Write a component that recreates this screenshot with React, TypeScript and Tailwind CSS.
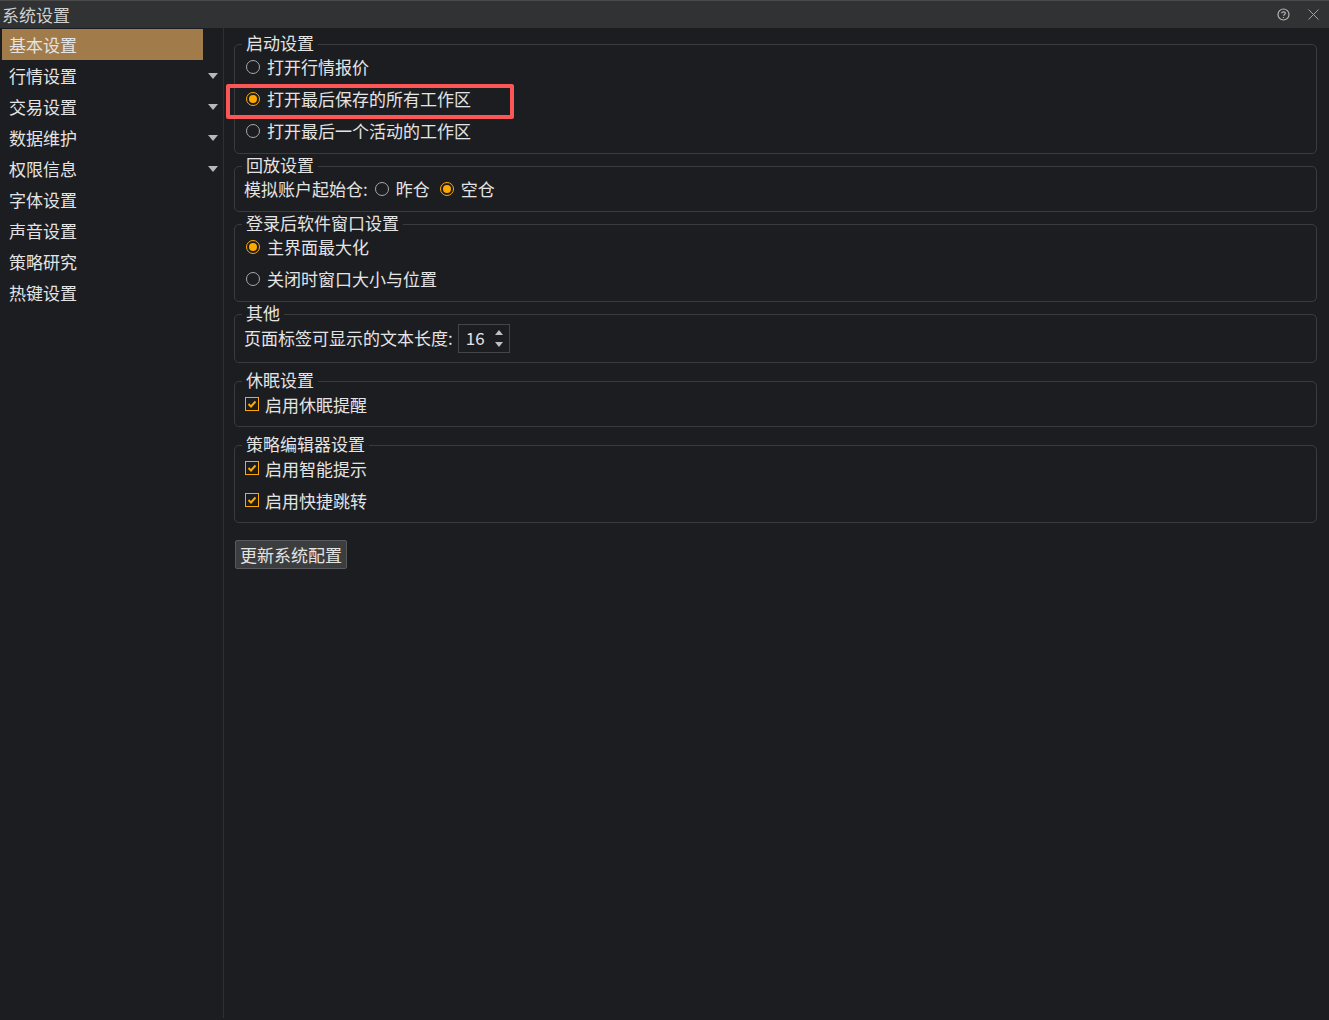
const font = { fontFamily: '"Noto Sans CJK SC", "Noto Sans", sans-serif' };

const menu = [
  { label: "基本设置", active: true },
  { label: "行情设置", arrow: true },
  { label: "交易设置", arrow: true },
  { label: "数据维护", arrow: true },
  { label: "权限信息", arrow: true },
  { label: "字体设置" },
  { label: "声音设置" },
  { label: "策略研究" },
  { label: "热键设置" },
];

function Radio({ checked }: { checked?: boolean }) {
  return (
    <span
      className={`flex h-[14px] w-[14px] shrink-0 items-center justify-center rounded-full border ${
        checked ? "border-[#ffa800]" : "border-[#a8a8a8]"
      }`}
    >
      {checked && <span className="h-[8px] w-[8px] rounded-full bg-[#ffa800]" />}
    </span>
  );
}

function RadioRow({ label, checked, h }: { label: string; checked?: boolean; h: string }) {
  return (
    <div className={`flex items-center gap-[7px] pl-[11px] ${h}`}>
      <Radio checked={checked} />
      <span>{label}</span>
    </div>
  );
}

function Check({ label, h }: { label: string; h: string }) {
  return (
    <div className={`flex items-center gap-[6px] pl-[10px] ${h}`}>
      <span className="flex h-[14px] w-[14px] shrink-0 items-center justify-center border border-[#ffa800]">
        <svg width="10" height="10" viewBox="0 0 10 10" fill="none">
          <path d="M1.5 5 L4 7.5 L8.5 2.5" stroke="#ffa800" strokeWidth="2" />
        </svg>
      </span>
      <span className="translate-y-px">{label}</span>
    </div>
  );
}

function Group({ title, className, children }: { title: string; className: string; children: React.ReactNode }) {
  return (
    <fieldset className={`rounded-[5px] border border-[#3a3b3e] ${className}`}>
      <legend className="ml-[7px] px-[4px] text-[17px] leading-[20px]">
        <span className="block -translate-y-px">{title}</span>
      </legend>
      {children}
    </fieldset>
  );
}

export default function App() {
  return (
    <div className="flex h-[1020px] w-[1329px] flex-col overflow-hidden bg-[#1c1d21] text-[17px] leading-[24px] text-[#e4e4e4]" style={font}>
      {/* Title bar */}
      <div className="flex h-[28px] shrink-0 items-center justify-between border-t border-[#4a4a4a] bg-[#313233] pl-[2px] pr-[10px]">
        <span className="text-[#d0d0d0]">系统设置</span>
        <div className="flex items-center gap-[18px]">
          <svg width="13" height="13" viewBox="0 0 13 13" fill="none" stroke="#b4b4b4">
            <circle cx="6.5" cy="6.5" r="5.5" strokeWidth="1.2" />
            <path d="M4.6 5.2 C4.6 3.3 8.4 3.3 8.4 5.2 C8.4 6.4 6.5 6.4 6.5 7.8" strokeWidth="1.2" />
            <path d="M6.5 9 V10" strokeWidth="1.2" />
          </svg>
          <svg width="11" height="11" viewBox="0 0 11 11" fill="none" stroke="#a0a0a0">
            <path d="M0.5 0.5 L10.5 10.5 M10.5 0.5 L0.5 10.5" />
          </svg>
        </div>
      </div>

      <div className="flex min-h-0 flex-1">
        {/* Sidebar */}
        <div className="mb-[2px] w-[224px] shrink-0 border-r border-[#2f3033] pt-px">
          {menu.map((m) => (
            <div
              key={m.label}
              className={`ml-[2px] flex h-[31px] w-[201px] items-center pl-[7px] ${m.active ? "bg-[#a27b4b]" : ""}`}
            >
              <span className="flex-1">{m.label}</span>
              {m.arrow && <span className="-mr-[15px] h-0 w-0 border-x-[5px] border-t-[6px] border-x-transparent border-t-[#b8b8b8]" />}
            </div>
          ))}
        </div>

        {/* Content */}
        <div className="relative min-w-0 flex-1 pl-[10px] pr-[12px] pt-[6px]">
          <Group title="启动设置" className="h-[120px]">
            <RadioRow label="打开行情报价" h="-mt-[3px] h-[32px]" />
            <RadioRow label="打开最后保存的所有工作区" checked h="h-[32px]" />
            <RadioRow label="打开最后一个活动的工作区" h="h-[32px]" />
          </Group>

          <Group title="回放设置" className="mt-[2px] h-[56px]">
            <div className="flex h-[26px] items-center pl-[9px]">
              <span>模拟账户起始仓:</span>
              <span className="ml-[7px]"><Radio /></span>
              <span className="ml-[7px]">昨仓</span>
              <span className="ml-[10px]"><Radio checked /></span>
              <span className="ml-[7px]">空仓</span>
            </div>
          </Group>

          <Group title="登录后软件窗口设置" className="mt-[2px] h-[88px]">
            <RadioRow label="主界面最大化" checked h="-mt-[3px] h-[32px]" />
            <RadioRow label="关闭时窗口大小与位置" h="h-[32px]" />
          </Group>

          <Group title="其他" className="mt-[2px] h-[59px]">
            <div className="-mt-px flex h-[30px] items-center pl-[9px]">
              <span>页面标签可显示的文本长度:</span>
              <div className="ml-[5px] flex h-[29px] w-[52px] items-center justify-between border border-[#44454a] pl-[7px] pr-[6px]">
                <span>16</span>
                <div className="flex flex-col gap-[7px]">
                  <span className="h-0 w-0 border-x-[4px] border-b-[5px] border-x-transparent border-b-[#c0c0c0]" />
                  <span className="h-0 w-0 border-x-[4px] border-t-[5px] border-x-transparent border-t-[#c0c0c0]" />
                </div>
              </div>
            </div>
          </Group>

          <Group title="休眠设置" className="mt-[8px] h-[56px]">
            <Check label="启用休眠提醒" h="h-[26px]" />
          </Group>

          <Group title="策略编辑器设置" className="mt-[8px] h-[88px]">
            <Check label="启用智能提示" h="h-[26px]" />
            <Check label="启用快捷跳转" h="mt-[6px] h-[26px]" />
          </Group>

          <button className="ml-px mt-[17px] block h-[29px] w-[112px] rounded-[2px] border border-[#58595c] bg-[#3c3d3f] text-center text-[17px] leading-[22px] text-[#e4e4e4]">
            更新系统配置
          </button>

          {/* Annotation */}
          <div className="absolute left-[2px] top-[56px] h-[35px] w-[288px] rounded-[2px] border-[4px] border-[#fc5656]" />
        </div>
      </div>
    </div>
  );
}
